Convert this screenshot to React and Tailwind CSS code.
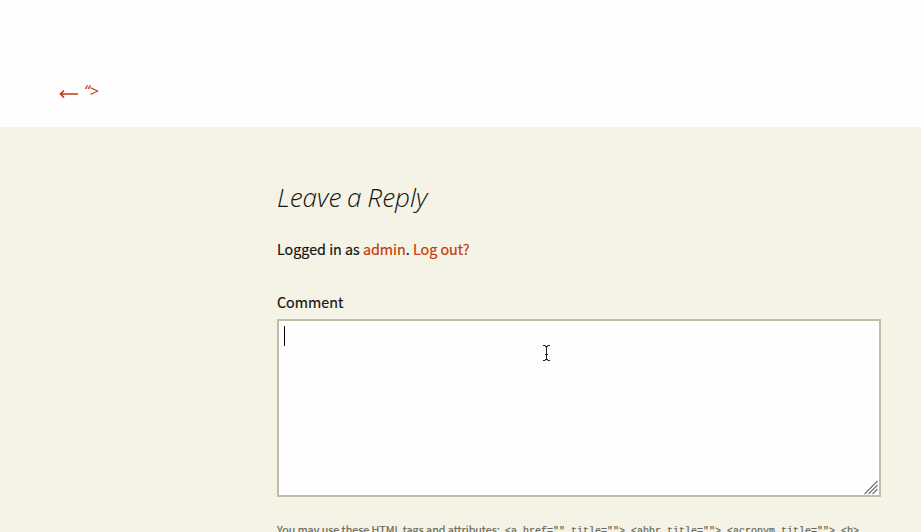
function Cursor() {
  return (
    <svg className="absolute left-[263px] top-[23px]" width="9" height="18" viewBox="0 0 9 18" fill="none" stroke="#222">
      <path d="M1 1.5h2.5M5.5 1.5H8M1 16.5h2.5M5.5 16.5H8M3 2.5h3M3 15.5h3M4.5 3v12M3 10.5h3" />
    </svg>
  );
}

function ResizeGrip() {
  return (
    <svg className="absolute bottom-0 right-[1px]" width="14" height="15" viewBox="0 0 14 15" fill="none" stroke="#777" strokeWidth="1.2">
      <path d="M0.5 14L13.5 1M4.5 14L13.5 5M8.5 14L13.5 9" />
    </svg>
  );
}

export default function App() {
  return (
    <div className="flex h-[532px] w-full flex-col overflow-hidden bg-[#f5f3e5] text-[14.3px] text-[#141412] [font-family:'Noto_Sans_CJK_SC','Noto_Sans',sans-serif] [-webkit-text-stroke:0.2px_currentColor]">
      <nav className="h-[127px] shrink-0 bg-[#fefefe] pl-[59px] pt-[80px]">
        <a className="flex items-center gap-[5px] leading-6 text-[#c6390c]">
          <svg className="mt-[5px]" width="20" height="10" viewBox="0 0 20 10" fill="none" stroke="currentColor" strokeWidth="1.7">
            <path d="M1.5 5H19M5 1.5L1.5 5L5 8.5" />
          </svg>
          <span className="-mt-px text-base italic [font-family:'Open_Sans',sans-serif] [-webkit-text-stroke:0]">“<span className="text-base">&gt;</span></span>
        </a>
      </nav>
      <main className="ml-[277px] w-[604px] pt-[52px]">
        <h3 className="h-[36px] origin-left scale-x-[1.005] whitespace-nowrap text-[26px] font-light italic leading-9 [word-spacing:-1px] [font-family:'Open_Sans',sans-serif] [-webkit-text-stroke:0]">Leave a Reply</h3>
        <p className="mt-[22px] h-6 whitespace-nowrap leading-6">
          Logged in as <a className="text-[#c6390c]">admin</a>. <a className="text-[#c6390c]">Log out?</a>
        </p>
        <label className="mt-[29px] block h-6 leading-6">Comment</label>
        <div className="relative mt-[5px] h-[178px] border-2 border-[#c0bfa5] bg-[#fefefe] pl-[5px] pt-[5px]">
          <div className="h-5 w-px bg-black" />
          <Cursor />
          <ResizeGrip />
        </div>
        <p className="mt-[25px] flex items-baseline whitespace-nowrap text-[10.75px] leading-4 text-[#686758]">
          <span className="w-[228px]">You may use these HTML tags and attributes:</span>
          <code className="text-[10px] [font-family:'Liberation_Mono',monospace]">{'<a href="" title=""> <abbr title=""> <acronym title=""> <b>'}</code>
        </p>
      </main>
    </div>
  );
}
